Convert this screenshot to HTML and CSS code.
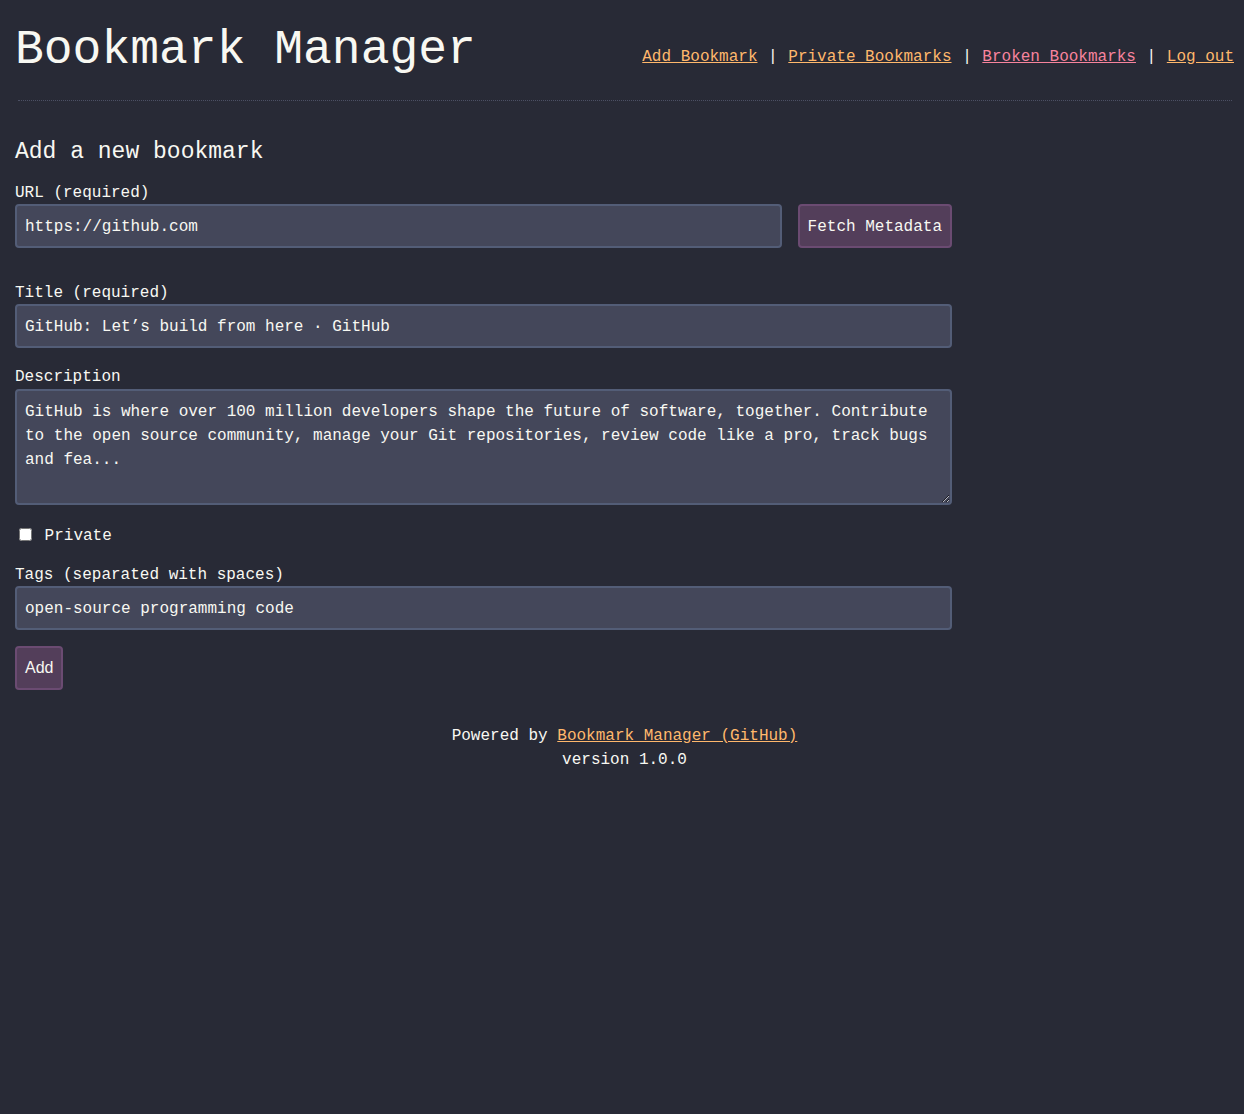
FILE: index.html
```html
<!DOCTYPE html>
<html lang="en">
<head>
<meta charset="utf-8">
<title>Bookmark Manager</title>
<link rel="stylesheet" href="styles.css">
</head>
<body>
<div class="page">
  <header class="header">
    <h1 class="title">Bookmark Manager</h1>
    <nav class="nav"><a href="#" class="nav-link">Add Bookmark</a><span class="sep"> | </span><a href="#" class="nav-link">Private Bookmarks</a><span class="sep"> | </span><a href="#" class="nav-link broken">Broken Bookmarks</a><span class="sep"> | </span><a href="#" class="nav-link">Log out</a></nav>
  </header>
  <hr class="rule">
  <main class="main">
    <h2 class="form-title">Add a new bookmark</h2>
    <form class="form">
      <div class="field field-url">
        <label class="label" for="url">URL (required)</label>
        <div class="url-row">
          <input class="input url-input" id="url" type="text" value="https://github.com">
          <button type="button" class="btn btn-mono">Fetch Metadata</button>
        </div>
      </div>
      <div class="field">
        <label class="label" for="title">Title (required)</label>
        <input class="input" id="title" type="text" value="GitHub: Let’s build from here · GitHub">
      </div>
      <div class="field">
        <label class="label label-desc" for="desc">Description</label>
        <textarea class="input textarea" id="desc" rows="4">GitHub is where over 100 million developers shape the future of software, together. Contribute to the open source community, manage your Git repositories, review code like a pro, track bugs and fea...</textarea>
      </div>
      <div class="field check-row">
        <input type="checkbox" id="private" class="checkbox"> <label for="private">Private</label>
      </div>
      <div class="field">
        <label class="label" for="tags">Tags (separated with spaces)</label>
        <input class="input" id="tags" type="text" value="open-source programming code">
      </div>
      <button type="button" class="btn btn-sans">Add</button>
    </form>
  </main>
  <footer class="footer">
    <div>Powered by <a href="#" class="footer-link">Bookmark Manager (GitHub)</a></div>
    <div>version 1.0.0</div>
  </footer>
</div>
</body>
</html>
```
FILE: styles.css
```css
html, body {
  margin: 0;
  padding: 0;
  background: #282a36;
  color: #f8f8f2;
}

body {
  font-family: "Liberation Mono", monospace;
  font-size: 16px;
  line-height: 1.5;
}

.page {
  padding: 0 10px 0 15px;
}

.header {
  display: flex;
  justify-content: space-between;
  align-items: flex-start;
  padding-top: 23px;
}

.title {
  margin: 0;
  font-family: "Liberation Mono", monospace;
  font-weight: normal;
  font-size: 48px;
  line-height: normal;
}

.nav {
  padding-top: 22px;
  font-family: "Liberation Mono", monospace;
  font-size: 16px;
  line-height: 24px;
  white-space: nowrap;
}

.nav-link {
  color: #ffb86c;
}

.nav-link.broken {
  color: #f7839d;
}

.sep {
  padding: 0 1px;
  white-space: pre;
}

.rule {
  margin: 23px 2px 34px 3px;
  border: 0;
  border-top: 1px dotted #4c5064;
  height: 0;
}

.form-title {
  margin: 0 0 9px;
  font-size: 23px;
  font-weight: normal;
  line-height: 1.5;
}

.form {
  width: 937px;
}

.field {
  margin-bottom: 15px;
}

.field-url {
  margin-bottom: 31px;
}

.label {
  display: block;
  padding-top: 4px;
  line-height: 20px;
  margin-bottom: 1px;
}

.label-desc {
  margin-bottom: 2px;
}

.url-row {
  display: flex;
  gap: 16px;
}

.input {
  display: block;
  box-sizing: border-box;
  width: 100%;
  margin: 0;
  padding: 9px 8px 7px;
  border: 2px solid #535d77;
  border-radius: 4px;
  background: #44475a;
  color: #f8f8f2;
  font-family: "Liberation Mono", monospace;
  font-size: 16px;
  line-height: 1.5;
  outline: none;
}

.url-input {
  flex: 1;
  width: auto;
}

.textarea {
  height: 116px;
  resize: vertical;
}

.check-row {
  margin-top: 19px;
  margin-bottom: 13px;
}

.checkbox {
  margin: 0 3px 0 4px;
  vertical-align: -1px;
}

.btn {
  box-sizing: border-box;
  margin: 0;
  padding: 8px;
  border: 2px solid #6b4b72;
  border-radius: 4px;
  background: #533e5a;
  color: #f8f8f2;
  font-size: 16px;
  line-height: 1.5;
  cursor: pointer;
}

.btn-mono {
  padding-top: 9px;
  padding-bottom: 7px;
  font-family: "Liberation Mono", monospace;
}

.btn-sans {
  margin-top: 1px;
  font-family: "Liberation Sans", Arial, sans-serif;
}

.footer {
  margin-top: 34px;
  text-align: center;
}

.footer-link {
  color: #ffb86c;
}
```
